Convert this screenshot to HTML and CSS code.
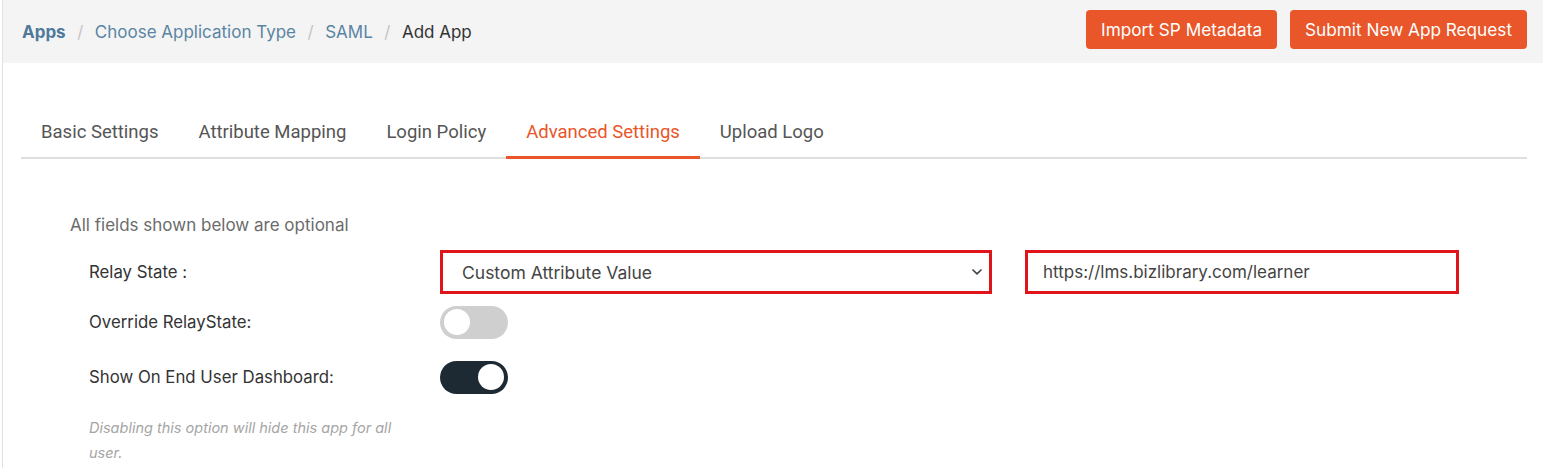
FILE: index.html
```html
<!DOCTYPE html>
<html>
<head>
<meta charset="utf-8">
<link rel="stylesheet" href="styles.css">
</head>
<body>
<div class="page">
  <header class="topbar">
    <nav class="crumbs">
      <a class="crumb crumb-root">Apps</a>
      <span class="sep">/</span>
      <a class="crumb">Choose Application Type</a>
      <span class="sep">/</span>
      <a class="crumb">SAML</a>
      <span class="sep">/</span>
      <span class="crumb-current">Add App</span>
    </nav>
    <div class="actions">
      <button class="btn">Import SP Metadata</button>
      <button class="btn">Submit New App Request</button>
    </div>
  </header>

  <main class="content">
    <div class="tabs">
      <div class="tab">Basic Settings</div>
      <div class="tab">Attribute Mapping</div>
      <div class="tab">Login Policy</div>
      <div class="tab active">Advanced Settings</div>
      <div class="tab">Upload Logo</div>
    </div>

    <section class="form">
      <p class="note">All fields shown below are optional</p>

      <div class="row row-relay">
        <label class="label">Relay State :</label>
        <div class="select">
          <span>Custom Attribute Value</span>
          <svg class="chev" width="12" height="8" viewBox="0 0 12 8"><path d="M2 2 L6 5.8 L10 2" fill="none" stroke="#444" stroke-width="1.7" stroke-linecap="round" stroke-linejoin="round"/></svg>
        </div>
        <div class="input">https://lms.bizlibrary.com/learner</div>
      </div>

      <div class="row row-toggle">
        <label class="label">Override RelayState:</label>
        <div class="toggle off"><span class="knob"></span></div>
      </div>

      <div class="row row-toggle">
        <label class="label">Show On End User Dashboard:</label>
        <div class="toggle on"><span class="knob"></span></div>
      </div>

      <p class="hint">Disabling this option will hide this app for all user.</p>
    </section>
  </main>
</div>
</body>
</html>
```

FILE: styles.css
```css
* { box-sizing: border-box; }
html, body { margin: 0; padding: 0; background: #fff; }
body {
  font-family: Inter, "Liberation Sans", sans-serif;
  color: #333;
}
.page {
  margin-left: 2px;
  border-left: 1px solid #e2e2e2;
  min-height: 468px;
}
.topbar {
  height: 63px;
  background: #f4f4f4;
  display: flex;
  align-items: flex-start;
  justify-content: space-between;
  padding: 0 16px 0 19px;
}
.crumbs {
  display: flex;
  align-items: center;
  gap: 11.5px;
  height: 63px;
  font-size: 17px;
}
.crumb { color: #5b84a3; }
.crumb-root { font-weight: 700; color: #4f7a9b; }
.sep { color: #c4c4c4; }
.crumb-current { color: #333; }
.actions {
  display: flex;
  gap: 13px;
  padding-top: 10px;
}
.btn {
  height: 39px;
  border: 0;
  border-radius: 4px;
  background: #e8562a;
  color: #fff;
  font-family: inherit;
  font-size: 17.2px;
  padding: 0 15px;
}
.content { padding: 44px 16px 0 18px; }
.tabs {
  display: flex;
  border-bottom: 2px solid #dedede;
}
.tab {
  height: 50px;
  display: flex;
  align-items: center;
  padding: 0 20px;
  font-family: Roboto, sans-serif;
  font-size: 18.5px;
  color: #555;
}
.tab.active {
  color: #e8562a;
  box-shadow: inset 0 -3px 0 #e8562a;
  margin-bottom: -2px;
  height: 52px;
  padding-bottom: 2px;
}
.form { padding-left: 49px; }
.note {
  margin: 56px 0 0;
  font-size: 17px;
  color: #6b6b6b;
}
.row {
  display: flex;
  align-items: center;
}
.label {
  width: 370px;
  padding-left: 19px;
  font-size: 16.8px;
  color: #333;
}
.row-relay { margin-top: 15px; height: 44px; }
.select {
  width: 552px;
  height: 44px;
  border: 3px solid #e0141b;
  display: flex;
  align-items: center;
  justify-content: space-between;
  padding: 0 6px 0 19px;
  font-size: 17.5px;
  color: #444;
}
.input {
  margin-left: 33px;
  width: 434px;
  height: 44px;
  border: 3px solid #e0141b;
  display: flex;
  align-items: center;
  padding-left: 15px;
  font-size: 17px;
  color: #444;
}
.row-toggle { height: 44px; margin-top: 6px; }
.row-toggle + .row-toggle { margin-top: 11px; }
.toggle {
  width: 68px;
  height: 33px;
  border-radius: 17px;
  display: flex;
  align-items: center;
  padding: 0 4px;
}
.toggle.off { background: #cfcfcf; justify-content: flex-start; }
.toggle.on { background: #1e2a33; justify-content: flex-end; }
.knob {
  width: 26px;
  height: 26px;
  border-radius: 50%;
  background: #fff;
}
.hint {
  margin: 16px 0 0 19px;
  width: 320px;
  font-size: 14.5px;
  line-height: 25px;
  font-style: italic;
  color: #a5a5a5;
}
```
